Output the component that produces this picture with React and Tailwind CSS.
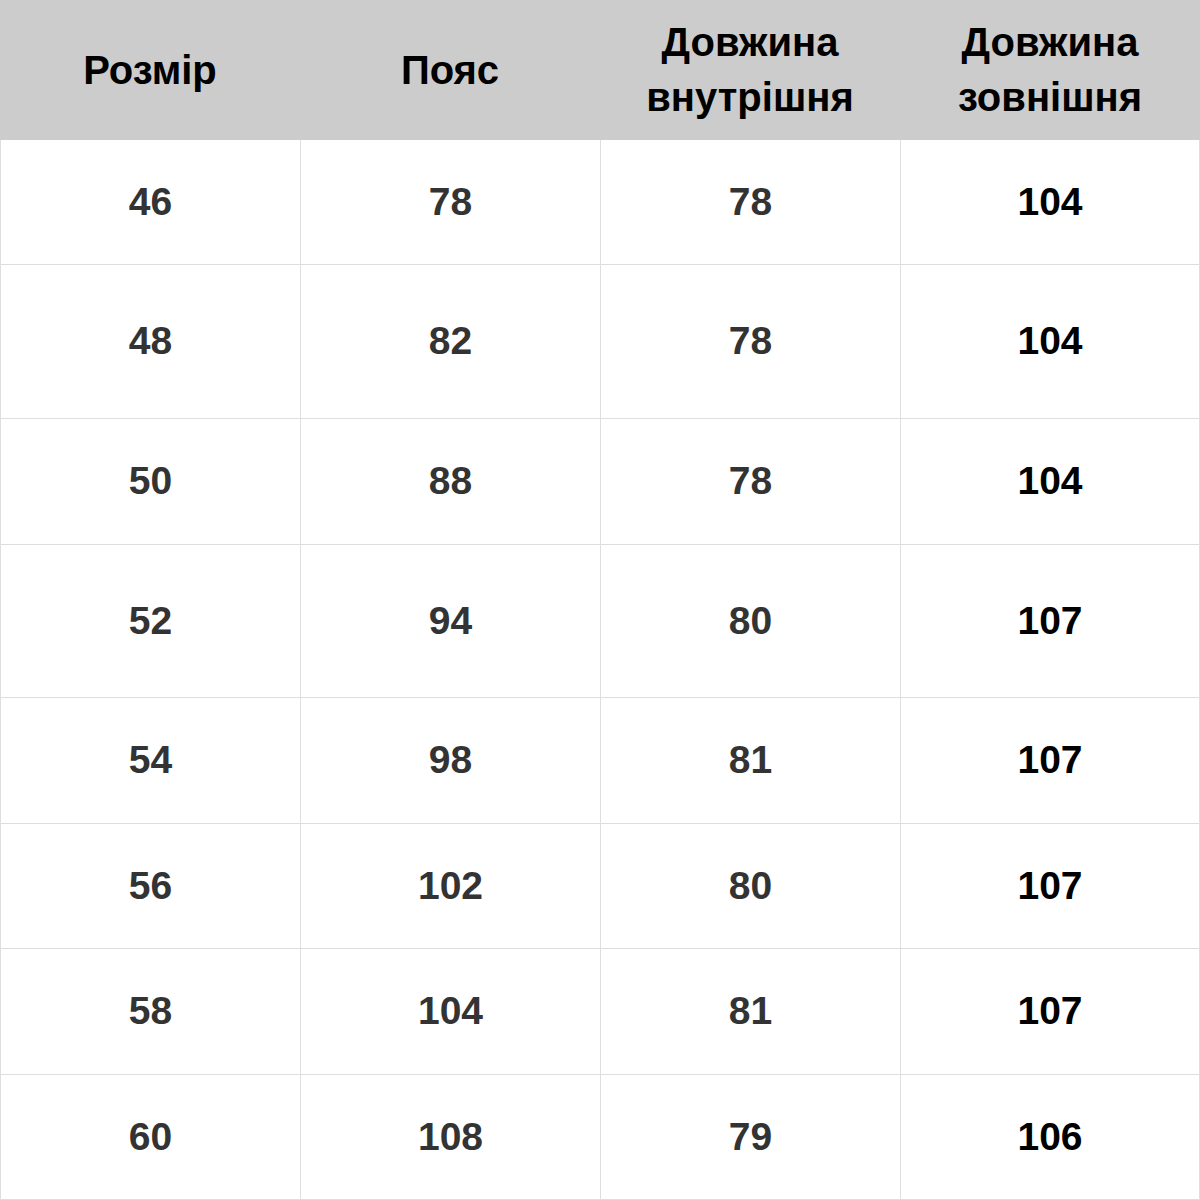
const HEADERS = [["Розмір"], ["Пояс"], ["Довжина", "внутрішня"], ["Довжина", "зовнішня"]];

const ROWS = [
  { h: "h-[125px]", cells: ["46", "78", "78", "104"] },
  { h: "h-[154px]", cells: ["48", "82", "78", "104"] },
  { h: "h-[126px]", cells: ["50", "88", "78", "104"] },
  { h: "h-[153px]", cells: ["52", "94", "80", "107"] },
  { h: "h-[126px]", cells: ["54", "98", "81", "107"] },
  { h: "h-[125px]", cells: ["56", "102", "80", "107"] },
  { h: "h-[126px]", cells: ["58", "104", "81", "107"] },
  { h: "h-[125px]", cells: ["60", "108", "79", "106"] },
];

export default function App() {
  return (
    <div className="w-[1200px] h-[1200px] bg-white font-['Liberation_Sans',Arial,sans-serif] font-bold text-[39px]">
      {/* Header */}
      <div className="grid grid-cols-4 h-[140px] bg-[#cccccc] text-black text-[40px]">
        {HEADERS.map((lines, i) => (
          <div key={i} className="flex flex-col items-center justify-center leading-[55px]">
            {lines.map((l) => (
              <span key={l}>{l}</span>
            ))}
          </div>
        ))}
      </div>

      {/* Body */}
      {ROWS.map((row, r) => (
        <div key={r} className={`grid grid-cols-4 ${row.h} border-b border-[#dedede]`}>
          {row.cells.map((c, i) => (
            <div
              key={i}
              className={`flex items-center justify-center border-l border-[#dedede] ${i === 3 ? "border-r text-black" : "text-[#333333]"}`}
            >
              {c}
            </div>
          ))}
        </div>
      ))}
    </div>
  );
}
